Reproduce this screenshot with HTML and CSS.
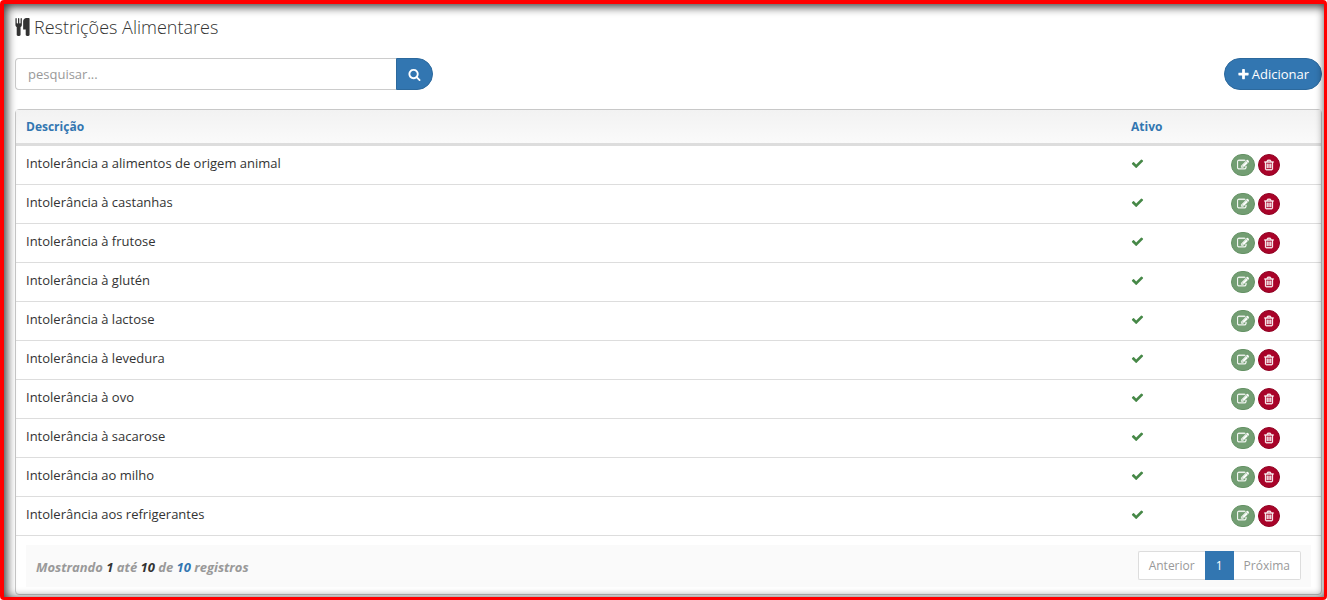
FILE: index.html
```
<!doctype html>
<html lang="pt-BR">
  <head>
    <meta charset="utf-8">
    <title>Restrições Alimentares</title>
    <link rel="stylesheet" href="styles.css">
  </head>
  <body>
    <svg class="sprite" aria-hidden="true">
      <symbol id="check" viewBox="0 0 1792 1792"><path d="M1671 566q0 40-28 68l-724 724-136 136q-28 28-68 28t-68-28l-136-136-362-362q-28-28-28-68t28-68l136-136q28-28 68-28t68 28l294 295 656-657q28-28 68-28t68 28l136 136q28 28 28 68z"/></symbol>
      <symbol id="edit" viewBox="0 0 1792 1792"><path d="M888 1184l116-116-152-152-116 116v56h96v96h56zm440-720q-16-16-33 1l-350 350q-17 17-1 33t33-1l350-350q17-17 1-33zm80 594v190q0 119-84.5 203.5t-203.5 84.5h-832q-119 0-203.5-84.5t-84.5-203.5v-832q0-119 84.5-203.5t203.5-84.5h832q63 0 117 25 15 7 18 23 3 17-9 29l-49 49q-14 14-32 8-23-6-45-6h-832q-66 0-113 47t-47 113v832q0 66 47 113t113 47h832q66 0 113-47t47-113v-126q0-13 9-22l64-64q15-15 35-7t20 29zm-96-738l288 288-672 672h-288v-288zm444 132l-92 92-288-288 92-92q28-28 68-28t68 28l152 152q28 28 28 68t-28 68z"/></symbol>
      <symbol id="trash" viewBox="0 0 1792 1792"><path d="M704 736v576q0 14-9 23t-23 9h-64q-14 0-23-9t-9-23v-576q0-14 9-23t23-9h64q14 0 23 9t9 23zm256 0v576q0 14-9 23t-23 9h-64q-14 0-23-9t-9-23v-576q0-14 9-23t23-9h64q14 0 23 9t9 23zm256 0v576q0 14-9 23t-23 9h-64q-14 0-23-9t-9-23v-576q0-14 9-23t23-9h64q14 0 23 9t9 23zm128 724v-948h-896v948q0 22 7 40.5t14.5 27 10.5 8.5h832q3 0 10.5-8.5t14.5-27 7-40.5zm-672-1076h448l-48-117q-7-9-17-11h-317q-10 2-17 11zm928 32v64q0 14-9 23t-23 9h-96v948q0 83-47 143.5t-113 60.5h-832q-66 0-113-58.5t-47-141.5v-952h-96q-14 0-23-9t-9-23v-64q0-14 9-23t23-9h309l70-167q15-37 54-63t79-26h320q40 0 79 26t54 63l70 167h309q14 0 23 9t9 23z"/></symbol>
    </svg>
    <main class="page">
      <h1 class="title">
        <svg class="title-icon" viewBox="192 0 1408 1792" aria-hidden="true"><path d="M832 64v640q0 61-35.500 111t-92.500 70v779q0 52-38 90t-90 38h-128q-52 0-90-38t-38-90v-779q-57-20-92.500-70t-35.500-111v-640q0-26 19-45t45-19 45 19 19 45v416q0 26 19 45t45 19 45-19 19-45v-416q0-26 19-45t45-19 45 19 19 45v416q0 26 19 45t45 19 45-19 19-45v-416q0-26 19-45t45-19 45 19 19 45zm768 0v1600q0 52-38 90t-90 38h-128q-52 0-90-38t-38-90v-512h-224q-13 0-22.500-9.500t-9.500-22.500v-800q0-132 94-226t226-94h256q26 0 45 19t19 45z"/></svg>
        Restrições Alimentares
      </h1>
      <div class="toolbar">
        <form class="search">
          <input type="text" class="search-input" placeholder="pesquisar..." aria-label="pesquisar">
          <button type="button" class="search-btn" aria-label="Buscar">
            <svg class="icon" viewBox="0 0 1792 1792"><path d="M1216 832q0-185-131.500-316.500t-316.500-131.500-316.500 131.500-131.500 316.500 131.500 316.500 316.500 131.500 316.500-131.500 131.500-316.500zm512 832q0 52-38 90t-90 38q-54 0-90-38l-343-342q-179 124-399 124-143 0-273.500-55.500t-225-150-150-225-55.500-273.500 55.500-273.500 150-225 225-150 273.500-55.500 273.500 55.500 225 150 150 225 55.500 273.500q0 220-124 399l343 343q37 37 37 90z"/></svg>
          </button>
        </form>
        <button type="button" class="add-btn">
          <svg class="icon" viewBox="0 0 1792 1792" aria-hidden="true"><path d="M1600 736v192q0 40-28 68t-68 28h-416v416q0 40-28 68t-68 28h-192q-40 0-68-28t-28-68v-416h-416q-40 0-68-28t-28-68v-192q0-40 28-68t68-28h416v-416q0-40 28-68t68-28h192q40 0 68 28t28 68v416h416q40 0 68 28t28 68z"/></svg>
          Adicionar
        </button>
      </div>
      <div class="panel">
        <table class="list">
          <thead>
            <tr><th>Descrição</th><th class="col-small">Ativo</th><th class="col-small"></th></tr>
          </thead>
          <tbody>
            <tr>
              <td>Intolerância a alimentos de origem animal</td>
              <td><svg class="icon check"><use href="#check"/></svg></td>
              <td><div class="actions"><button type="button" class="edit" aria-label="Editar"><svg class="icon"><use href="#edit"/></svg></button><button type="button" class="remove" aria-label="Excluir"><svg class="icon"><use href="#trash"/></svg></button></div></td>
            </tr>
            <tr>
              <td>Intolerância à castanhas</td>
              <td><svg class="icon check"><use href="#check"/></svg></td>
              <td><div class="actions"><button type="button" class="edit" aria-label="Editar"><svg class="icon"><use href="#edit"/></svg></button><button type="button" class="remove" aria-label="Excluir"><svg class="icon"><use href="#trash"/></svg></button></div></td>
            </tr>
            <tr>
              <td>Intolerância à frutose</td>
              <td><svg class="icon check"><use href="#check"/></svg></td>
              <td><div class="actions"><button type="button" class="edit" aria-label="Editar"><svg class="icon"><use href="#edit"/></svg></button><button type="button" class="remove" aria-label="Excluir"><svg class="icon"><use href="#trash"/></svg></button></div></td>
            </tr>
            <tr>
              <td>Intolerância à glutén</td>
              <td><svg class="icon check"><use href="#check"/></svg></td>
              <td><div class="actions"><button type="button" class="edit" aria-label="Editar"><svg class="icon"><use href="#edit"/></svg></button><button type="button" class="remove" aria-label="Excluir"><svg class="icon"><use href="#trash"/></svg></button></div></td>
            </tr>
            <tr>
              <td>Intolerância à lactose</td>
              <td><svg class="icon check"><use href="#check"/></svg></td>
              <td><div class="actions"><button type="button" class="edit" aria-label="Editar"><svg class="icon"><use href="#edit"/></svg></button><button type="button" class="remove" aria-label="Excluir"><svg class="icon"><use href="#trash"/></svg></button></div></td>
            </tr>
            <tr>
              <td>Intolerância à levedura</td>
              <td><svg class="icon check"><use href="#check"/></svg></td>
              <td><div class="actions"><button type="button" class="edit" aria-label="Editar"><svg class="icon"><use href="#edit"/></svg></button><button type="button" class="remove" aria-label="Excluir"><svg class="icon"><use href="#trash"/></svg></button></div></td>
            </tr>
            <tr>
              <td>Intolerância à ovo</td>
              <td><svg class="icon check"><use href="#check"/></svg></td>
              <td><div class="actions"><button type="button" class="edit" aria-label="Editar"><svg class="icon"><use href="#edit"/></svg></button><button type="button" class="remove" aria-label="Excluir"><svg class="icon"><use href="#trash"/></svg></button></div></td>
            </tr>
            <tr>
              <td>Intolerância à sacarose</td>
              <td><svg class="icon check"><use href="#check"/></svg></td>
              <td><div class="actions"><button type="button" class="edit" aria-label="Editar"><svg class="icon"><use href="#edit"/></svg></button><button type="button" class="remove" aria-label="Excluir"><svg class="icon"><use href="#trash"/></svg></button></div></td>
            </tr>
            <tr>
              <td>Intolerância ao milho</td>
              <td><svg class="icon check"><use href="#check"/></svg></td>
              <td><div class="actions"><button type="button" class="edit" aria-label="Editar"><svg class="icon"><use href="#edit"/></svg></button><button type="button" class="remove" aria-label="Excluir"><svg class="icon"><use href="#trash"/></svg></button></div></td>
            </tr>
            <tr>
              <td>Intolerância aos refrigerantes</td>
              <td><svg class="icon check"><use href="#check"/></svg></td>
              <td><div class="actions"><button type="button" class="edit" aria-label="Editar"><svg class="icon"><use href="#edit"/></svg></button><button type="button" class="remove" aria-label="Excluir"><svg class="icon"><use href="#trash"/></svg></button></div></td>
            </tr>
          </tbody>
        </table>
        <div class="footer">
          <div class="info">Mostrando <span class="dark">1</span> até <span class="dark">10</span> de <span class="total">10</span> registros</div>
          <nav class="pagination">
            <a href="#">Anterior</a>
            <a href="#" class="active">1</a>
            <a href="#">Próxima</a>
          </nav>
        </div>
      </div>
    </main>
  </body>
</html>
```
FILE: styles.css
```
* {
  box-sizing: border-box;
}
body {
  margin: 0;
  background: #fff;
  color: #333;
  font-family: "Open Sans", sans-serif;
  font-size: 13px;
  line-height: 18px;
}
button, input {
  font: inherit;
}
button {
  border: 0;
  padding: 0;
  color: #fff;
  cursor: pointer;
}
.sprite {
  display: none;
}
.icon {
  display: block;
  width: 13px;
  height: 13px;
  fill: currentColor;
}
.page {
  position: relative;
  min-height: 100vh;
  padding: 15px 5px 4px 15px;
}
/* red frame and its inner shadow lie over the content */
.page::after {
  content: "";
  position: absolute;
  top: 0;
  right: 0;
  bottom: 0;
  left: 0;
  border: solid #f00;
  border-width: 4px 3px 3px 4px;
  border-radius: 4px;
  box-shadow: inset 2px 2px 10px 1px rgba(0, 0, 0, .75);
  pointer-events: none;
}
.title {
  display: flex;
  align-items: center;
  gap: 4px;
  margin: 0 0 19px;
  font-size: 18px;
  font-weight: 300;
  line-height: 24px;
}
.title-icon {
  width: 15px;
  height: 18px;
  fill: #333;
}
.toolbar {
  display: flex;
  justify-content: space-between;
  margin-bottom: 19px;
}
.search {
  display: flex;
  width: 32%;
}
.search-input {
  flex: 1;
  min-width: 0;
  height: 32px;
  padding: 0 12px;
  border: 1px solid #ccc;
  border-right: 0;
  border-radius: 4px 0 0 4px;
  color: #555;
}
.search-input::placeholder {
  color: #999;
}
.search-btn {
  display: flex;
  align-items: center;
  justify-content: center;
  width: 37px;
  background: #3276b1;
  border: 1px solid #2c699d;
  border-radius: 0 16px 16px 0;
}
.add-btn {
  display: flex;
  align-items: center;
  gap: 2px;
  height: 32px;
  padding: 0 12px;
  background: #3276b1;
  border: 1px solid #2c699d;
  border-radius: 16px;
}
.panel {
  border: 1px solid #c8c8c8;
  border-radius: 4px;
}
.list {
  width: 100%;
  border-spacing: 0;
  table-layout: fixed;
}
.list th {
  height: 36px;
  padding: 0 10px;
  background: linear-gradient(#f2f2f2, #fafafa);
  border-bottom: 3px solid #ddd;
  color: #3276b1;
  font-size: 12px;
  text-align: left;
}
.list .col-small {
  width: 100px;
}
.list td {
  padding: 8px 10px;
  border-bottom: 1px solid #ddd;
  vertical-align: top;
}
.check {
  margin-top: 3px;
  color: #468847;
}
.actions {
  display: flex;
  gap: 3px;
}
.actions button {
  display: flex;
  align-items: center;
  justify-content: center;
  height: 22px;
  border-radius: 12px;
}
.actions .edit {
  width: 24px;
  background: #739e73;
  border: 1px solid #659265;
}
.actions .remove {
  width: 22px;
  background: #a90329;
  border: 1px solid #900323;
}
.actions .icon {
  width: 12px;
  height: 12px;
  stroke: currentColor;
  stroke-width: 50px;
}
.footer {
  display: flex;
  justify-content: space-between;
  align-items: center;
  margin: 9px 10px 7px;
  padding: 6px 10px 7px;
  background: #fafafa;
}
.info {
  padding-top: 2px;
  color: #999;
  font-style: italic;
  font-weight: 700;
}
.dark {
  color: #333;
}
.total {
  color: #3276b1;
}
.pagination {
  display: flex;
}
.pagination a {
  padding: 5px 10px;
  background: #fff;
  border: 1px solid #ddd;
  color: #999;
  font-size: 12px;
  line-height: 17px;
  text-decoration: none;
}
.pagination a:first-child {
  border-right: 0;
  border-radius: 2px 0 0 2px;
}
.pagination a:last-child {
  border-left: 0;
  border-radius: 0 2px 2px 0;
}
.pagination .active {
  background: #3276b1;
  border-color: #3276b1;
  color: #fff;
}
```
